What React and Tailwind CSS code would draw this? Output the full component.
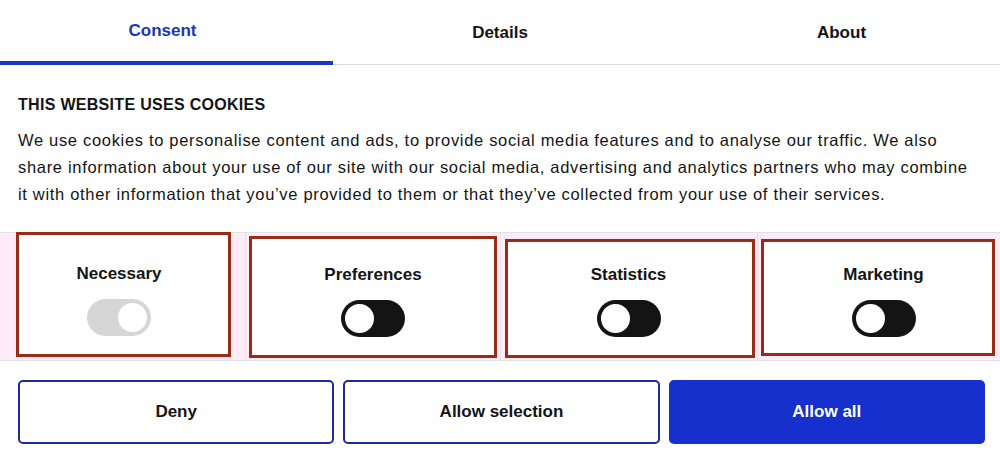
import React from "react";

const tabs = ["Consent", "Details", "About"];

function Toggle({ disabled }) {
  return (
    <div
      className={
        "w-[64px] h-[37px] rounded-full flex items-center px-[4px] " +
        (disabled ? "bg-[#d6d6d6] justify-end" : "bg-[#141414] justify-start")
      }
    >
      <div className="w-[29px] h-[29px] rounded-full bg-white" />
    </div>
  );
}

function Category({ label, disabled, className }) {
  return (
    <div className={"border-[3px] border-[#992b18] bg-white flex flex-col items-center " + className}>
      <span className="text-[17px] font-bold text-[#141414] leading-none">{label}</span>
      <div className="mt-[17px]">
        <Toggle disabled={disabled} />
      </div>
    </div>
  );
}

export default function App() {
  return (
    <div className="w-[1000px] h-[462px] bg-white overflow-hidden font-['Liberation_Sans',Arial,sans-serif] text-[#141414]">
      <nav className="grid grid-cols-[333px_334px_333px]">
        {tabs.map((t, i) => (
          <div
            key={t}
            className={
              "h-[65px] flex items-center justify-center text-[17px] font-bold pt-[1px] " +
              (i === 0
                ? "text-[#1a36b8] border-b-[4px] border-[#1a36c4] pr-[8px]"
                : i === 2
                ? "border-b border-[#dcdcdc] pl-[16px]"
                : "border-b border-[#dcdcdc]")
            }
          >
            {t}
          </div>
        ))}
      </nav>

      <div className="pl-[18px] pr-[30px] pt-[30px]">
        <h2 className="text-[16px] font-bold leading-[20px] tracking-[0.3px]">
          THIS WEBSITE USES COOKIES
        </h2>
        <p className="mt-[12px] text-[16.5px] leading-[27px] tracking-[0.68px]">
          We use cookies to personalise content and ads, to provide social media features and to analyse our traffic. We also share information about your use of our site with our social media, advertising and analytics partners who may combine it with other information that you’ve provided to them or that they’ve collected from your use of their services.
        </p>
      </div>

      <div className="mt-[24px] h-[129px] border-y border-[#e2e2e2] grid grid-cols-[246px_255px_257px_242px]">
        <div className="bg-[#fdebf8] border-r border-[#e2e2e2] pl-[16px] pr-[14px] pb-[2px]">
          <Category label="Necessary" disabled className="h-full -mt-[1px] pt-[30px] pr-[9px]" />
        </div>
        <div className="bg-[#fdebf8] border-r border-[#e2e2e2] pl-[3px] pr-[3px] pt-[3px] pb-[2px]">
          <Category label="Preferences" className="h-full pt-[27px]" />
        </div>
        <div className="bg-[#fdebf8] border-r border-[#e2e2e2] pl-[4px] pr-[2px] pt-[6px] pb-[2px]">
          <Category label="Statistics" className="h-full pt-[24px] pr-[3px]" />
        </div>
        <div className="bg-[#fdebf8] pl-[3px] pr-[5px] pt-[6px] pb-[4px]">
          <Category label="Marketing" className="h-full pt-[24px] pl-[11px]" />
        </div>
      </div>

      <div className="pl-[18px] pr-[15px] pt-[19px] grid grid-cols-3 gap-[9px]">
        <button className="h-[64px] rounded-[5px] border-2 border-[#1b2a9e] bg-white text-[17px] font-bold">
          Deny
        </button>
        <button className="h-[64px] rounded-[5px] border-2 border-[#1b2a9e] bg-white text-[17px] font-bold">
          Allow selection
        </button>
        <button className="h-[64px] rounded-[5px] bg-[#1530cc] text-white text-[17px] font-bold">
          Allow all
        </button>
      </div>
    </div>
  );
}
